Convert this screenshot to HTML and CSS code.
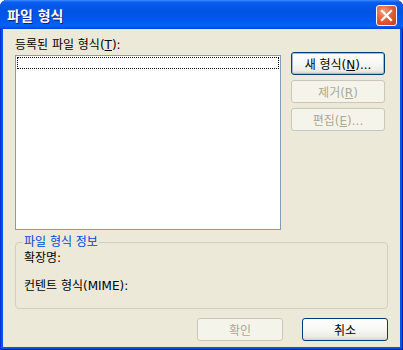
FILE: index.html
```html
<!DOCTYPE html>
<html lang="ko">
<head>
    <meta charset="UTF-8">
    <title>파일 형식</title>
    <link rel="stylesheet" href="styles.css">
</head>
<body>
    <div class="window">
        <div class="titlebar">
            <span class="title">파일 형식</span>
            <span class="close">
                <svg width="13" height="13" viewBox="0 0 13 13">
                    <path d="M2 2 L11 11 M11 2 L2 11" stroke="#fff" stroke-width="2.2" stroke-linecap="square"/>
                </svg>
            </span>
        </div>
        <div class="client">
            <div class="top">
                <div class="left">
                    <div class="label">등록된 파일 형식(<u>T</u>):</div>
                    <div class="list"><div class="focus"></div></div>
                </div>
                <div class="side">
                    <button class="btn default">새 형식(<u>N</u>)...</button>
                    <button class="btn" disabled>제거(<u>R</u>)</button>
                    <button class="btn" disabled>편집(<u>E</u>)...</button>
                </div>
            </div>
            <fieldset class="group">
                <legend>파일 형식 정보</legend>
                <div class="row">확장명:</div>
                <div class="row second">컨텐트 형식(MIME):</div>
            </fieldset>
            <div class="actions">
                <button class="btn wide" disabled>확인</button>
                <button class="btn wide">취소</button>
            </div>
        </div>
    </div>
</body>
</html>
```

FILE: styles.css
```css
body{
    margin: 0;
    background: #fff;
    font-family: "DejaVu Sans", "Noto Sans CJK KR", sans-serif;
    font-size: 12px;
    color: #000;
}
.window{
    width: 403px;
    height: 350px;
    display: flex;
    flex-direction: column;
    background: #0055e5;
    border-radius: 7px 7px 0 0;
    box-shadow: inset 1px 0 0 #0831d9, inset -1px 0 0 #001ea0, inset 0 -1px 0 #001ea0;
}
.titlebar{
    height: 29px;
    display: flex;
    align-items: center;
    justify-content: space-between;
    padding: 0 6px 0 7px;
    border-radius: 7px 7px 0 0;
    background: linear-gradient(to bottom, #3a8cff 0%, #0a5cf0 8%, #0054e3 35%, #0058ee 70%, #0062f8 88%, #0050e0 96%, #003dd7 100%);
}
.title{
    color: #fff;
    font-weight: bold;
    font-size: 14px;
    text-shadow: 1px 1px 0 #0a1f82;
    margin-top: 1px;
}
.close{
    width: 19px;
    height: 19px;
    border: 1px solid #fff;
    border-radius: 3px;
    display: flex;
    align-items: center;
    justify-content: center;
    background: radial-gradient(circle at 35% 30%, #f1a088 0%, #e2603c 45%, #c63c1a 100%);
    margin-top: 1px;
}
.client{
    flex: 1;
    margin: 0 3px 3px 3px;
    background: #ece9d8;
    padding: 9px 12px 0 12px;
}
.top{
    display: flex;
}
.left{
    width: 266px;
}
.label{
    height: 17px;
    line-height: 15px;
}
.list{
    height: 175px;
    box-sizing: border-box;
    border: 1px solid #7f9db9;
    background: #fff;
    padding: 1px;
}
.focus{
    height: 12px;
    border: 1px dotted #000;
    box-sizing: border-box;
}
.side{
    display: flex;
    flex-direction: column;
    gap: 5px;
    margin-left: 10px;
    padding-top: 14px;
}
.btn{
    width: 94px;
    height: 23px;
    box-sizing: border-box;
    border: 1px solid #003c74;
    border-radius: 3px;
    background: linear-gradient(to bottom, #ffffff 0%, #f7f7f4 50%, #ecebe6 85%, #d6d0c5 100%);
    font-family: inherit;
    font-size: 12px;
    color: #000;
    padding: 0;
}
.btn.default{
    box-shadow: inset 0 0 0 1px #9fb8e8;
}
.btn:disabled{
    border-color: #c9c7ba;
    background: #f5f4ea;
    color: #aca899;
}
.btn.wide{
    width: 86px;
}
.group{
    margin: 5px 0 0 0;
    height: 74px;
    box-sizing: border-box;
    border: 1px solid #d0d0bf;
    border-radius: 4px;
    padding: 2px 8px 0 8px;
}
.group legend{
    color: #0046d5;
    padding: 0 1px;
    margin-left: -1px;
    line-height: 14px;
}
.row{
    line-height: 14px;
}
.row.second{
    margin-top: 14px;
}
.actions{
    display: flex;
    justify-content: flex-end;
    gap: 19px;
    margin-top: 9px;
}
```
